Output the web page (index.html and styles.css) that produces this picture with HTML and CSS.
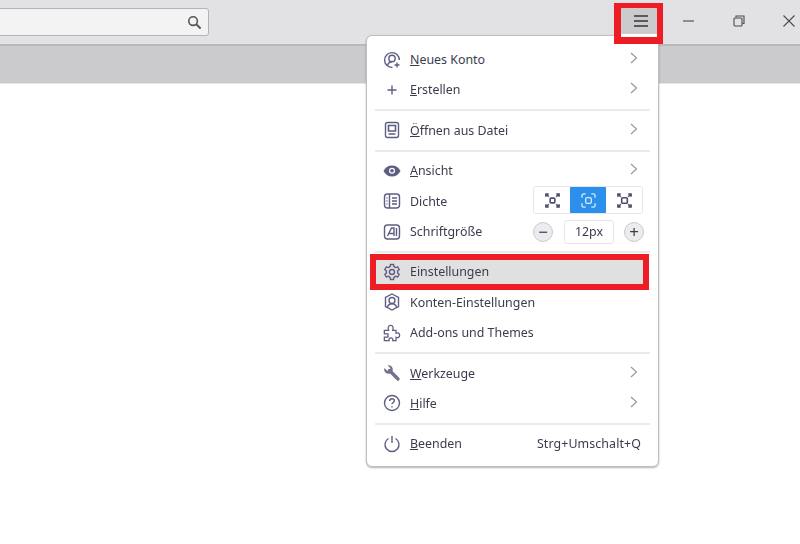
FILE: index.html
```html
<!DOCTYPE html>
<html lang="de">
<head>
    <meta charset="UTF-8">
    <title>Einstellungen</title>
    <link rel="stylesheet" href="styles.css">
</head>
<body>
<div class="page">

    <!-- Toolbar -->
    <div class="toolbar">
        <div class="search">
            <svg class="search-icon" viewBox="0 0 16 16"><circle cx="6.5" cy="6.5" r="4.6"/><path d="M10 10l4.5 4.5" stroke-width="2.2"/></svg>
        </div>
        <div class="menu-button">
            <svg viewBox="0 0 14 12"><path d="M0 1h14M0 6h14M0 11h14"/></svg>
        </div>
        <div class="window-controls">
            <div class="window-button"><svg viewBox="0 0 12 12"><path d="M0 6h11"/></svg></div>
            <div class="window-button"><svg viewBox="0 0 12 12"><path d="M3 2.5V1h8v7.500H9.500"/><rect x="1" y="3" width="8" height="8" rx="1"/></svg></div>
            <div class="window-button"><svg viewBox="0 0 12 12"><path d="M.5.5l11 11M11.500.5l-11 11"/></svg></div>
        </div>
    </div>

    <div class="tabbar"></div>

    <!-- App menu -->
    <div class="app-menu">
        <div class="row">
            <svg class="icon" viewBox="0 0 18 18"><path d="M9.500 16.400A7.400 7.400 0 1 1 16.400 9"/><circle cx="9" cy="7.500" r="3.200"/><path d="M4.700 14.200c.6-2.300 2.200-3.500 4.300-3.500"/><path d="M14 11.500v5M11.500 14h5"/></svg>
            <span class="label"><u>N</u>eues Konto</span>
            <svg class="chevron" viewBox="0 0 8 12"><path d="M1 1l5.500 5L1 11"/></svg>
        </div>
        <div class="row">
            <svg class="icon" viewBox="0 0 18 18"><path d="M9 4.500v9M4.500 9h9"/></svg>
            <span class="label"><u>E</u>rstellen</span>
            <svg class="chevron" viewBox="0 0 8 12"><path d="M1 1l5.500 5L1 11"/></svg>
        </div>
        <div class="sep"></div>
        <div class="row">
            <svg class="icon" viewBox="0 0 18 18"><rect x="2.500" y="1.500" width="13" height="15" rx="2"/><path d="M5.500 4.500h7v5.500h-7zM5.500 13h7" stroke-width="1.600"/></svg>
            <span class="label"><u>Ö</u>ffnen aus Datei</span>
            <svg class="chevron" viewBox="0 0 8 12"><path d="M1 1l5.500 5L1 11"/></svg>
        </div>
        <div class="sep"></div>
        <div class="row">
            <svg class="icon" viewBox="0 0 18 18"><path class="fill" d="M.5 9c2-3.800 5-5.500 8.500-5.500s6.500 1.700 8.500 5.500c-2 3.800-5 5.500-8.500 5.500S2.500 12.800.5 9z"/><circle cx="9" cy="8.800" r="3" fill="#fff" stroke="none"/><circle class="fill" cx="9" cy="8.800" r="1.800"/></svg>
            <span class="label"><u>A</u>nsicht</span>
            <svg class="chevron" viewBox="0 0 8 12"><path d="M1 1l5.500 5L1 11"/></svg>
        </div>
        <div class="row">
            <svg class="icon" viewBox="0 0 18 18"><rect x="1.500" y="2" width="15" height="14" rx="3"/><path d="M6.500 2v14M9 6h5M9 9h5M9 12h5M3.500 6h1M3.500 9h1M3.500 12h1"/></svg>
            <span class="label">Dichte</span>
            <div class="density">
                <div class="density-item">
                    <svg viewBox="0 0 16 16"><rect x="5.500" y="5.500" width="5" height="5" rx="1"/><path d="M1 1l3 3M15 1l-3 3M1 15l3-3M15 15l-3-3M1 4V1h3M12 1h3v3M1 12v3h3M12 15h3v-3"/></svg>
                </div>
                <div class="density-item selected">
                    <svg viewBox="0 0 16 16"><rect x="5" y="5" width="6" height="6" rx="1.500"/><path d="M1 5V3a2 2 0 0 1 2-2h2M11 1h2a2 2 0 0 1 2 2v2M1 11v2a2 2 0 0 0 2 2h2M11 15h2a2 2 0 0 0 2-2v-2"/></svg>
                </div>
                <div class="density-item">
                    <svg viewBox="0 0 16 16"><rect x="5" y="5" width="6" height="6" rx="1"/><path d="M1 4V1h3M12 1h3v3M1 12v3h3M12 15h3v-3M1 1l3 3M15 1l-3 3M1 15l3-3M15 15l-3-3"/></svg>
                </div>
            </div>
        </div>
        <div class="row">
            <svg class="icon" viewBox="0 0 18 18"><rect x="1.500" y="2" width="15" height="14" rx="3"/><path d="M4.500 13L8.500 5h2.500v8M6 10.500h5M13.500 5v8"/></svg>
            <span class="label">Schriftgröße</span>
            <div class="font-size">
                <div class="round-button">−</div>
                <div class="size-value">12px</div>
                <div class="round-button">+</div>
            </div>
        </div>
        <div class="sep"></div>
        <div class="row active">
            <svg class="icon" viewBox="0 0 18 18"><path d="M7.500 1.500h3l.5 2.200 1.600.9 2.100-.7 1.500 2.600-1.600 1.500v1.900l1.600 1.500-1.500 2.600-2.100-.7-1.600.9-.5 2.300h-3l-.5-2.300-1.600-.9-2.100.7-1.500-2.600 1.600-1.500V8L1.800 6.500l1.500-2.600 2.100.7L7 3.700z"/><circle cx="9" cy="9" r="2.500"/></svg>
            <span class="label">Einstellungen</span>
        </div>
        <div class="row">
            <svg class="icon" viewBox="0 0 18 18"><path d="M9 1l6.500 3.500v9L9 17l-6.500-3.500v-9z"/><circle cx="9" cy="7.500" r="3"/><path d="M4.500 14c.5-2.200 2.200-3.300 4.500-3.300s4 1.100 4.500 3.300"/></svg>
            <span class="label">Konten-Einstellungen</span>
        </div>
        <div class="row">
            <svg class="icon" viewBox="0 0 20 20"><path d="M1.500 7h4.700C5.300 4.800 5.500 1.500 8.500 1.500s3.200 3.300 2.300 5.500h3.700v3.300c2-.8 4-.2 4 2.200s-2 3-4 2.200v3.800h-3.700c.5-1.500-.2-3-2-3s-2.500 1.500-2 3H1.500v-4h4v-3.500h-4z"/></svg>
            <span class="label">Add-ons und Themes</span>
        </div>
        <div class="sep"></div>
        <div class="row">
            <svg class="icon wrench" viewBox="0 0 18 18"><circle class="fill" cx="5.500" cy="5.500" r="4.300"/><path d="M.5 3L4 .5 7.500 4.500 4.500 7z" fill="#fff" stroke="none"/><path d="M6.500 6.500L15 15" stroke-width="3.400" stroke-linecap="round"/></svg>
            <span class="label"><u>W</u>erkzeuge</span>
            <svg class="chevron" viewBox="0 0 8 12"><path d="M1 1l5.500 5L1 11"/></svg>
        </div>
        <div class="row">
            <svg class="icon" viewBox="0 0 18 18"><circle cx="9" cy="9" r="7.500"/><path d="M6.700 7c0-1.400 1-2.200 2.300-2.200s2.300.8 2.300 2c0 1.800-2.300 1.700-2.300 3.500"/><path d="M9 12.200v1.400"/></svg>
            <span class="label"><u>H</u>ilfe</span>
            <svg class="chevron" viewBox="0 0 8 12"><path d="M1 1l5.500 5L1 11"/></svg>
        </div>
        <div class="sep"></div>
        <div class="row">
            <svg class="icon" viewBox="0 0 18 18"><path d="M5.500 3.500a7 7 0 1 0 7 0M9 1v7"/></svg>
            <span class="label"><u>B</u>eenden</span>
            <span class="shortcut">Strg+Umschalt+Q</span>
        </div>
    </div>

</div>
</body>
</html>
```

FILE: styles.css
```css
html, body {
    margin: 0;
    padding: 0;
    background-color: #fff;
}
.page {
    position: relative;
    width: 800px;
    height: 544px;
    overflow: hidden;
    font-family: "Noto Sans", sans-serif;
    font-size: 12.4px;
    color: #3b3b4d;
    filter: blur(0.45px);
}
svg {
    display: block;
    fill: none;
    stroke-width: 1.4;
}

/* toolbar */
.toolbar {
    display: flex;
    height: 44px;
    background-color: #e2e2e4;
    border-bottom: 2px solid #b9b9bb;
}
.search {
    flex: none;
    display: flex;
    align-items: center;
    justify-content: flex-end;
    box-sizing: border-box;
    width: 213px;
    height: 28px;
    margin: 8px 0 0 -4px;
    padding-right: 6px;
    background-color: #f3f3f3;
    border: 1px solid #b3b3b7;
    border-radius: 3px;
}
.search-icon {
    width: 15px;
    height: 15px;
    stroke: #55555a;
    stroke-width: 1.7;
}
.menu-button {
    flex: none;
    position: relative;
    z-index: 2;
    display: flex;
    align-items: center;
    justify-content: center;
    box-sizing: border-box;
    width: 49px;
    height: 41px;
    margin: 3px 0 0 405px;
    background-color: #cbcbcd;
    border: 6px solid #ee1c25;
    border-width: 5px 6px 7px 7px;
    box-shadow: inset 0 -3px 0 #fff;
}
.menu-button svg {
    width: 14px;
    height: 12px;
    margin: -3px 0 0 3px;
    stroke: #35353c;
    stroke-width: 1.6;
}
.window-controls {
    flex: none;
    display: flex;
    margin-left: 1px;
}
.window-button {
    display: flex;
    align-items: center;
    justify-content: center;
    width: 50px;
    height: 42px;
}
.window-button svg {
    width: 12px;
    height: 12px;
    stroke: #4a4a4e;
    stroke-width: 1.1;
}
.tabbar {
    height: 37px;
    background-color: #cbcbcd;
    border-bottom: 1px solid #e4e4e6;
}

/* menu */
.app-menu {
    position: absolute;
    left: 366px;
    top: 35px;
    z-index: 1;
    box-sizing: border-box;
    width: 293px;
    height: 432px;
    padding: 8.4px 0 0;
    background-color: #fff;
    border: 1px solid #bfbfc3;
    border-radius: 6px;
    box-shadow: 0 1px 2px rgba(0, 0, 0, 0.3);
}
.row {
    display: flex;
    align-items: center;
    height: 30.4px;
    margin: 0 8px;
    padding: 0 12px 0 8px;
}
.row.active {
    margin: 0 12px 0 6px;
    padding-left: 10px;
    background-color: #e0e0e0;
    outline: 6px solid #ee1c25;
    outline-offset: -3px;
}
.icon {
    flex: none;
    width: 18px;
    height: 18px;
    margin-right: 9px;
    stroke: #5e5e82;
}
.icon .fill {
    fill: #5e5e82;
    stroke: none;
}
.icon.wrench {
    stroke: #73738f;
}
.icon.wrench .fill {
    fill: #73738f;
}
.label {
    flex: 1;
}
.chevron {
    width: 8px;
    height: 12px;
    margin-top: -3px;
    stroke: #9a9a9e;
    stroke-width: 1.2;
}
.shortcut {
    margin-right: -3px;
    letter-spacing: 0.1px;
}
.sep {
    height: 2px;
    margin: 4px 8px;
    background-color: #ebebeb;
}

/* density */
.density {
    display: flex;
    margin: -2px -5px 0 0;
    border: 1px solid #e6e6e8;
    border-radius: 3px;
}
.density-item {
    display: flex;
    align-items: center;
    justify-content: center;
    width: 36px;
    height: 26px;
}
.density-item svg {
    width: 15px;
    height: 15px;
    stroke: #4d4d6e;
    stroke-width: 1.7;
}
.density-item.selected {
    background-color: #2a90ec;
}
.density-item.selected svg {
    stroke: #d6e9fb;
    stroke-width: 1.4;
}

/* font size */
.font-size {
    display: flex;
    align-items: center;
    margin-right: -6px;
}
.round-button {
    display: flex;
    align-items: center;
    justify-content: center;
    box-sizing: border-box;
    width: 20px;
    height: 20px;
    background-color: #ececee;
    border: 1px solid #c9c9cc;
    border-radius: 50%;
    font-size: 17px;
    line-height: 1;
}
.size-value {
    box-sizing: border-box;
    width: 50px;
    height: 24px;
    margin: 0 10px 0 11px;
    border: 1px solid #e6e6e8;
    border-radius: 3px;
    line-height: 22px;
    text-align: center;
}
```
